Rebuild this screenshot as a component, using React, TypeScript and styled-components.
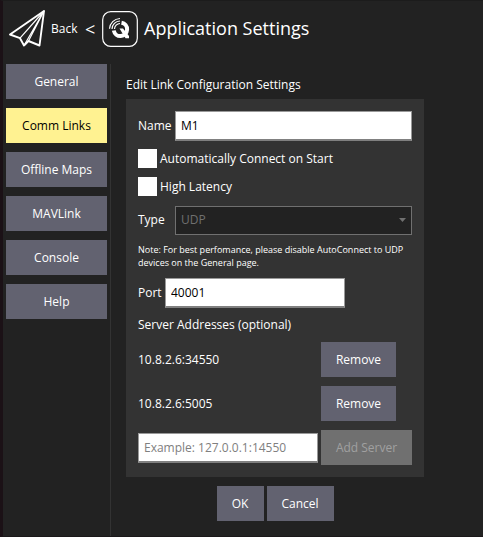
import React from "react";
import styled, { createGlobalStyle } from "styled-components";

const GlobalStyle = createGlobalStyle`
  * { box-sizing: border-box; }
  html, body { margin: 0; background: #222222; }
  body, button, input {
    font-family: "Open Sans", "Noto Sans", sans-serif;
    font-size: 12px;
    line-height: 18px;
  }
`;

const Window = styled.div`
  width: 483px;
  height: 537px;
  display: flex;
  flex-direction: column;
  overflow: hidden;
  background: #222222;
  color: #ffffff;
  border-left: 3px solid #1b1116;
  border-top: 1px solid #1c1c1c;
  border-bottom: 1px solid #1b181a;
  white-space: nowrap;
`;

const Header = styled.header`
  display: flex;
  align-items: center;
  height: 55px;
  padding-left: 6px;
`;

const BackLabel = styled.span`
  width: 34px;
  margin-left: 6px;
`;

const Chevron = styled.span`
  width: 17px;
  font-size: 18px;
  line-height: 24px;
`;

const Title = styled.h1`
  margin: 0 0 2px 6px;
  font-size: 18px;
  line-height: 26px;
  font-weight: 400;
`;

const Body = styled.div`
  flex: 1;
  display: flex;
  padding-top: 8px;
`;

const Sidebar = styled.nav`
  width: 108px;
  display: flex;
  flex-direction: column;
  gap: 9px;
  padding: 0 4px 0 3px;
  border-right: 1px solid #333333;
`;

const Button = styled.button<{ $width: number; $active?: boolean }>`
  width: ${(p) => p.$width}px;
  height: 35px;
  padding: 0;
  border: 0;
  flex: none;
  background: ${(p) => (p.$active ? "#fff291" : "#626270")};
  color: ${(p) => (p.$active ? "#000000" : "#ffffff")};
  &:disabled {
    background: #707070;
    color: #a0a0a0;
  }
`;

const Content = styled.main`
  width: 298px;
  margin-left: 15px;
  padding-top: 12px;
`;

const Caption = styled.div`
  height: 23px;
`;

const Panel = styled.section`
  height: 378px;
  padding: 12px;
  background: #333333;
  display: flex;
  flex-direction: column;
  & > * { flex: none; }
`;

const Field = styled.label<{ $gap: number }>`
  display: flex;
  align-items: center;
  height: 30px;
  margin-bottom: ${(p) => p.$gap}px;
`;

const FieldName = styled.span<{ $width: number }>`
  width: ${(p) => p.$width}px;
  flex: none;
`;

const TextInput = styled.input<{ $width: number }>`
  width: ${(p) => p.$width}px;
  height: 30px;
  padding: 0 5px;
  border: 1px solid #999999;
  border-bottom: 2px solid #808080;
  border-radius: 0;
  background: #ffffff;
  color: #000000;
  outline: none;
  &::placeholder { color: #808080; opacity: 1; }
`;

const Select = styled.div`
  width: 237px;
  height: 29px;
  display: flex;
  align-items: center;
  justify-content: space-between;
  padding: 0 5px;
  border: 1px solid #707070;
  background: #222222;
  color: #707070;
`;

const CheckRow = styled.label`
  display: flex;
  align-items: center;
  gap: 3px;
  height: 19px;
  margin-bottom: 9px;
`;

const CheckBox = styled.span`
  width: 19px;
  height: 19px;
  background: #ffffff;
`;

const Note = styled.p`
  margin: 0 0 9px;
  font-size: 9px;
  line-height: 13px;
`;

const ServerHeading = styled.div`
  height: 34px;
  padding-top: 8px;
`;

const ServerRow = styled.div`
  display: flex;
  align-items: center;
  height: 35px;
  margin-bottom: 9px;
`;

const ServerCell = styled.div`
  width: 183px;
  display: flex;
  flex: none;
`;

const Actions = styled.footer`
  display: flex;
  justify-content: center;
  gap: 3px;
  margin-top: 9px;
`;

const PlaneIcon = () => (
  <svg width="36" height="37" viewBox="0 0 36 37" fill="none" stroke="#fff" strokeLinejoin="round">
    <path d="M35 1 L1 24.5 L11 28.2 L15 35.5 L19.5 31 L30.5 35.5 Z" strokeWidth="1.9" />
    <path d="M35 1 L11 28.2 M35 1 L15 35.5 M35 1 L19.5 31" strokeWidth="1.2" />
  </svg>
);

const AppIcon = () => (
  <svg width="36" height="36" viewBox="0 0 36 36" fill="none" stroke="#fff">
    <rect x="0.7" y="0.7" width="34.6" height="34.6" rx="8" strokeWidth="1.2" />
    <path d="M19.5 11.7 A6.7 6.7 0 1 1 11.8 19.5" strokeWidth="4" />
    <path d="M17.5 17.5 L21 17.5 L27 25 L27 27.2 L23.5 27.2 Z" fill="#fff" stroke="none" />
    <path d="M7.5 17.8 A10.8 10.8 0 0 1 18 7.5 M10 18 A8.2 8.2 0 0 1 18 10 M12.5 18 A5.7 5.7 0 0 1 18 12.5" strokeWidth="1.2" />
  </svg>
);

const pages = ["General", "Comm Links", "Offline Maps", "MAVLink", "Console", "Help"];
const servers = ["10.8.2.6:34550", "10.8.2.6:5005"];

export default function App() {
  return (
    <>
      <GlobalStyle />
      <Window>
        <Header>
          <PlaneIcon />
          <BackLabel>Back</BackLabel>
          <Chevron>&lt;</Chevron>
          <AppIcon />
          <Title>Application Settings</Title>
        </Header>
        <Body>
          <Sidebar>
            {pages.map((page) => (
              <Button key={page} $width={101} $active={page === "Comm Links"}>{page}</Button>
            ))}
          </Sidebar>
          <Content>
            <Caption>Edit Link Configuration Settings</Caption>
            <Panel>
              <Field $gap={8}>
                <FieldName $width={37}>Name</FieldName>
                <TextInput $width={237} defaultValue="M1" />
              </Field>
              <CheckRow><CheckBox />Automatically Connect on Start</CheckRow>
              <CheckRow><CheckBox />High Latency</CheckRow>
              <Field $gap={8}>
                <FieldName $width={37}>Type</FieldName>
                <Select>
                  UDP
                  <svg width="7" height="4" viewBox="0 0 7 4"><path d="M0 0H7L3.5 4Z" fill="#707070" /></svg>
                </Select>
              </Field>
              <Note>
                Note: For best perfomance, please disable AutoConnect to UDP
                <br />
                devices on the General page.
              </Note>
              <Field $gap={0}>
                <FieldName $width={27}>Port</FieldName>
                <TextInput $width={180} defaultValue="40001" />
              </Field>
              <ServerHeading>Server Addresses (optional)</ServerHeading>
              {servers.map((server) => (
                <ServerRow key={server}>
                  <ServerCell>{server}</ServerCell>
                  <Button $width={75}>Remove</Button>
                </ServerRow>
              ))}
              <ServerRow>
                <ServerCell>
                  <TextInput $width={180} placeholder="Example: 127.0.0.1:14550" />
                </ServerCell>
                <Button $width={91} disabled>Add Server</Button>
              </ServerRow>
            </Panel>
            <Actions>
              <Button $width={47}>OK</Button>
              <Button $width={67}>Cancel</Button>
            </Actions>
          </Content>
        </Body>
      </Window>
    </>
  );
}
